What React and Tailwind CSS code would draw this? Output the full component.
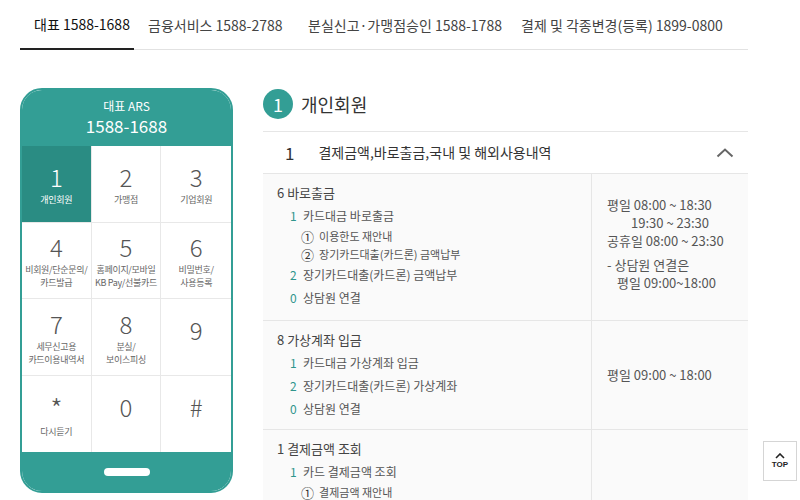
import React from 'react';

const FONT = { fontFamily: '"Noto Sans CJK KR", "Noto Sans", sans-serif' };

const tabs = [
  { t: '대표 1588-1688', w: 'w-[114px]' },
  { t: '금융서비스 1588-2788', w: 'w-[160px]' },
  { t: '분실신고·가맹점승인 1588-1788', w: 'w-[213px]' },
  { t: '결제 및 각종변경(등록) 1899-0800', w: 'w-[225px]' },
];

const keys = [
  { n: '1', l: ['개인회원'], active: true },
  { n: '2', l: ['가맹점'] },
  { n: '3', l: ['기업회원'] },
  { n: '4', l: ['비회원/단순문의/', '카드발급'] },
  { n: '5', l: ['홈페이지/모바일', 'KB Pay/선불카드'] },
  { n: '6', l: ['비밀번호/', '사용등록'] },
  { n: '7', l: ['세무신고용', '카드이용내역서'] },
  { n: '8', l: ['분실/', '보이스피싱'] },
  { n: '9', l: [] },
  { n: '*', l: ['다시듣기'] },
  { n: '0', l: [] },
  { n: '#', l: [] },
];

const Item = ({ num, children }) => (
  <div className="flex items-center gap-[6px] pl-[13px] h-[23px] text-[12px] text-[#555] whitespace-nowrap">
    <span className="text-[#2f958c] w-[7px]">{num}</span>
    <span>{children}</span>
  </div>
);

const Circle = ({ num, children }) => (
  <div className="flex items-center gap-[5px] pl-[24px] h-[18px] text-[11px] text-[#555] whitespace-nowrap">
    <span className="text-[13px] leading-none text-[#333]">{num}</span>
    <span>{children}</span>
  </div>
);

const Section = ({ title, children, right, h }) => (
  <div className={`flex border-b border-[#e6e6e6] ${h}`}>
    <div className="flex-1 pl-[14px] pt-[9px] border-r border-[#e6e6e6]">
      <div className="text-[13px] text-[#444] mb-[2px]">{title}</div>
      {children}
    </div>
    <div className="w-[156px] pl-[15px] flex flex-col justify-center text-[13px] text-[#555] leading-[18px] whitespace-nowrap">
      {right}
    </div>
  </div>
);

export default function App() {
  return (
    <div className="w-[800px] h-[500px] bg-white overflow-hidden relative" style={FONT}>
      <div className="flex ml-[20px] w-[728px] border-b border-[#e2e2e2] h-[50px]">
        {tabs.map((tab, i) => (
          <div
            key={i}
            className={`${tab.w} pl-[14px] h-[50px] flex items-center text-[14px] whitespace-nowrap ${i === 0 ? 'border-b-2 border-[#222] text-[#111]' : 'text-[#444]'}`}
          >
            {tab.t}
          </div>
        ))}
      </div>

      <div className="flex mt-[38px]">
        <div className="ml-[20px] w-[213px] h-[405px] rounded-[22px] border-2 border-[#339e95] overflow-hidden flex flex-col bg-white">
          <div className="bg-[#339e95] h-[56px] flex flex-col items-center justify-center text-white">
            <div className="text-[12px] leading-[16px]">대표 ARS</div>
            <div className="text-[17px] leading-[24px]">1588-1688</div>
          </div>
          <div className="grid grid-cols-3">
            {keys.map((k, i) => (
              <div
                key={i}
                className={`h-[76.5px] flex flex-col items-center justify-center ${k.active ? 'bg-[#2a8c83] text-white' : 'text-[#555]'} ${i % 3 !== 2 ? 'border-r border-[#e8e8e8]' : ''} ${i < 9 ? 'border-b border-[#e8e8e8]' : ''}`}
              >
                <div className={`${k.n === '*' ? 'text-[28px] pt-[4px]' : 'text-[24px]'} leading-[31px] font-light ${k.l.length ? 'mb-[1px]' : 'pb-[14px]'}`}>{k.n}</div>
                {k.l.map((s, j) => (
                  <div key={j} className={`text-[9px] leading-[13px] tracking-[-0.3px] whitespace-nowrap ${k.active ? 'text-white' : 'text-[#666]'}`}>{s}</div>
                ))}
              </div>
            ))}
          </div>
          <div className="flex-1 bg-[#339e95] flex items-center justify-center">
            <div className="w-[46px] h-[8px] rounded-full bg-white" />
          </div>
        </div>

        <div className="ml-[30px] w-[485px]">
          <div className="flex items-center h-[30px] mt-[1px]">
            <div className="w-[30px] h-[30px] rounded-full bg-[#339e95] text-white text-[18px] flex items-center justify-center">1</div>
            <div className="ml-[8px] text-[18px] text-[#333]">개인회원</div>
          </div>
          <div className="mt-[12px] border-t border-b border-[#e6e6e6] h-[43px] flex items-center">
            <span className="ml-[22px] text-[17px] text-[#333]">1</span>
            <span className="ml-[24px] text-[14px] text-[#333]">결제금액,바로출금,국내 및 해외사용내역</span>
            <svg className="ml-auto mr-[14px]" width="18" height="10" viewBox="0 0 18 10" fill="none">
              <path d="M1.5 8.5 L9 1.5 L16.5 8.5" stroke="#666" strokeWidth="2" />
            </svg>
          </div>
          <div className="bg-[#fafafa]">
            <Section
              title="6 바로출금"
              h="h-[147px]"
              right={
                <>
                  <div className="-mt-[6px]">평일 08:00 ~ 18:30</div>
                  <div className="pl-[24px]">19:30 ~ 23:30</div>
                  <div>공휴일 08:00 ~ 23:30</div>
                  <div className="mt-[6px]">- 상담원 연결은</div>
                  <div className="pl-[10px]">평일 09:00~18:00</div>
                </>
              }
            >
              <Item num="1">카드대금 바로출금</Item>
              <Circle num="①">이용한도 재안내</Circle>
              <Circle num="②">장기카드대출(카드론) 금액납부</Circle>
              <Item num="2">장기카드대출(카드론) 금액납부</Item>
              <Item num="0">상담원 연결</Item>
            </Section>
            <Section title="8 가상계좌 입금" h="h-[109px]" right={<div>평일 09:00 ~ 18:00</div>}>
              <Item num="1">카드대금 가상계좌 입금</Item>
              <Item num="2">장기카드대출(카드론) 가상계좌</Item>
              <Item num="0">상담원 연결</Item>
            </Section>
            <Section title="1 결제금액 조회" h="h-[120px]" right={null}>
              <Item num="1">카드 결제금액 조회</Item>
              <Circle num="①">결제금액 재안내</Circle>
            </Section>
          </div>
        </div>
      </div>

      <div className="absolute left-[763px] top-[441px] w-[34px] h-[40px] bg-white border border-[#d5d5d5] flex flex-col items-center justify-center">
        <svg width="10" height="6" viewBox="0 0 10 6" fill="none">
          <path d="M1 5 L5 1 L9 5" stroke="#222" strokeWidth="1.6" />
        </svg>
        <div className="text-[8px] font-bold leading-[10px] text-[#222] mt-[1px]" style={{ fontFamily: '"Liberation Sans", sans-serif' }}>TOP</div>
      </div>
    </div>
  );
}
